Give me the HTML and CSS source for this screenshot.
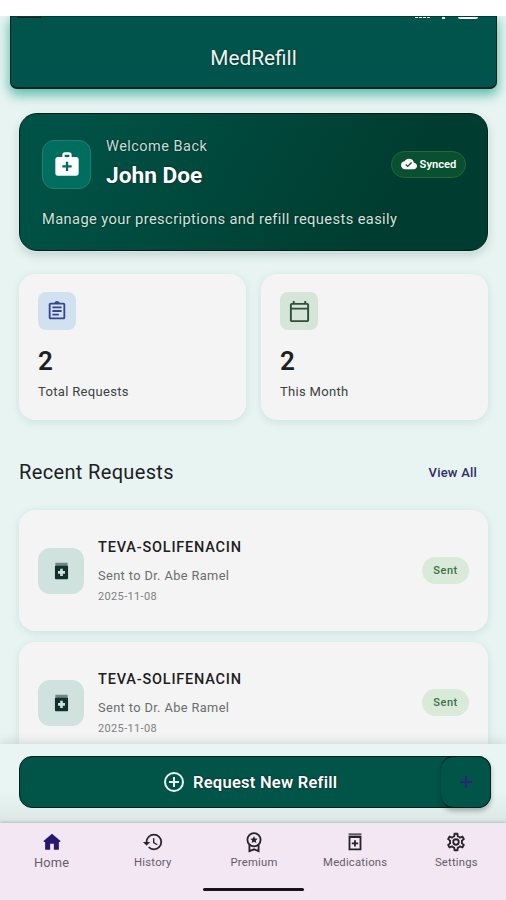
FILE: index.html
```html
<!DOCTYPE html>
<html lang="en">
<head>
<meta charset="utf-8">
<title>MedRefill</title>
<link rel="stylesheet" href="styles.css">
</head>
<body>
<div class="phone">
  <header class="topbar">
    <div class="status">
      <span class="clock"></span>
      <span class="signal"><i></i><i></i><i></i><i></i></span><span class="wifi"></span><span class="battery"></span>
    </div>
    <h1>MedRefill</h1>
  </header>

  <main class="content">
    <section class="hero">
      <div class="hero-row">
        <div class="hero-icon">
          <svg width="28" height="28" viewBox="0 0 24 24"><path fill="#fff" fill-rule="evenodd" d="M20 6h-4V4c0-1.100-.9-2-2-2h-4c-1.100 0-2 .9-2 2v2H4c-1.100 0-2 .9-2 2v12c0 1.100.9 2 2 2h16c1.100 0 2-.9 2-2V8c0-1.100-.9-2-2-2zM10 4h4v2h-4zm6 11h-3v3h-2v-3H8v-2h3v-3h2v3h3z"/></svg>
        </div>
        <div class="hero-text">
          <p class="welcome">Welcome Back</p>
          <p class="name">John Doe</p>
        </div>
        <div class="synced">
          <svg width="16" height="16" viewBox="0 0 24 24"><path fill="#fff" d="M19.350 10.040A7.490 7.490 0 0 0 12 4C9.110 4 6.600 5.640 5.350 8.040A5.994 5.994 0 0 0 0 14c0 3.310 2.690 6 6 6h13c2.760 0 5-2.240 5-5 0-2.640-2.050-4.780-4.650-4.960zM10 17l-3.500-3.500 1.410-1.410L10 14.170l5.180-5.170 1.410 1.410z"/></svg>
          <span>Synced</span>
        </div>
      </div>
      <p class="tagline">Manage your prescriptions and refill requests easily</p>
    </section>

    <section class="stats">
      <article class="card stat">
        <div class="stat-icon blue">
          <svg width="22" height="22" viewBox="0 0 24 24"><path fill="#34468f" fill-rule="evenodd" d="M7 15h7v2H7zm0-4h10v2H7zm0-4h10v2H7zm12-4h-4.180C14.400 1.840 13.300 1 12 1s-2.400.84-2.820 2H5c-1.100 0-2 .9-2 2v14c0 1.100.9 2 2 2h14c1.100 0 2-.9 2-2V5c0-1.100-.9-2-2-2zm0 16H5V5h14z"/></svg>
        </div>
        <p class="count">2</p>
        <p class="label">Total Requests</p>
      </article>
      <article class="card stat">
        <div class="stat-icon green">
          <svg width="23" height="23" viewBox="0 0 24 24"><path fill="#2f4f39" fill-rule="evenodd" d="M20 3h-1V1h-2v2H7V1H5v2H4c-1.100 0-2 .9-2 2v16c0 1.100.9 2 2 2h16c1.100 0 2-.9 2-2V5c0-1.100-.9-2-2-2zm0 18H4V10h16zm0-13H4V5h16z"/></svg>
        </div>
        <p class="count">2</p>
        <p class="label">This Month</p>
      </article>
    </section>

    <div class="section-head">
      <h2>Recent Requests</h2>
      <a class="view-all">View All</a>
    </div>

    <section class="requests">
      <article class="card request">
        <div class="med-icon">
          <svg width="21" height="22" viewBox="0 0 24 24" preserveAspectRatio="none"><path fill="#6e8580" d="M5 3h14v3H5z"/><path fill="#12302d" fill-rule="evenodd" d="M5.500 6h13c.6 0 1 .4 1 1v13c0 .6-.4 1-1 1h-13c-.6 0-1-.4-1-1V7c0-.6.4-1 1-1zM16 12h-2.500V9.500h-3V12H8v3h2.500v2.500h3V15H16z"/></svg>
        </div>
        <div class="request-text">
          <h3>TEVA-SOLIFENACIN</h3>
          <p class="doctor">Sent to Dr. Abe Ramel</p>
          <p class="date">2025-11-08</p>
        </div>
        <span class="sent">Sent</span>
      </article>
      <article class="card request">
        <div class="med-icon">
          <svg width="21" height="22" viewBox="0 0 24 24" preserveAspectRatio="none"><path fill="#6e8580" d="M5 3h14v3H5z"/><path fill="#12302d" fill-rule="evenodd" d="M5.500 6h13c.6 0 1 .4 1 1v13c0 .6-.4 1-1 1h-13c-.6 0-1-.4-1-1V7c0-.6.4-1 1-1zM16 12h-2.500V9.500h-3V12H8v3h2.500v2.500h3V15H16z"/></svg>
        </div>
        <div class="request-text">
          <h3>TEVA-SOLIFENACIN</h3>
          <p class="doctor">Sent to Dr. Abe Ramel</p>
          <p class="date">2025-11-08</p>
        </div>
        <span class="sent">Sent</span>
      </article>
    </section>
  </main>

  <div class="action">
    <div class="new-refill">
      <svg width="24" height="24" viewBox="0 0 24 24" fill="none" stroke="#eef4f2" stroke-width="2"><circle cx="12" cy="12" r="9"/><path d="M12 7v10M7 12h10"/></svg>
      <span>Request New Refill</span>
      <div class="fab"><svg width="14" height="14" viewBox="0 0 14 14"><path d="M7 1v12M1 7h12" stroke="#2d2273" stroke-width="2"/></svg></div>
    </div>
  </div>

  <nav class="nav">
    <a class="tab active">
      <svg width="22" height="22" viewBox="0 0 24 24"><path fill="#281770" d="M12 3 3 10.500V12h1.500v8.500H10V14h4v6.500h5.500V12H21v-1.500z"/></svg>
      <span>Home</span>
    </a>
    <a class="tab">
      <svg width="22" height="22" viewBox="0 0 24 24"><path fill="#27222c" d="M13 3a9 9 0 0 0-9 9H1l3.890 3.890.07.14L9 12H6c0-3.870 3.130-7 7-7s7 3.130 7 7-3.130 7-7 7c-1.930 0-3.680-.79-4.940-2.060l-1.420 1.420A8.954 8.954 0 0 0 13 21a9 9 0 0 0 0-18zm-1 5v5l4.280 2.540.72-1.210-3.500-2.080V8z"/></svg>
      <span>History</span>
    </a>
    <a class="tab">
      <svg width="22" height="22" viewBox="0 0 24 24" fill="none" stroke="#27222c" stroke-width="2"><circle cx="12" cy="9.500" r="7.200"/><path d="M7 15v7l5-2 5 2v-7"/><path fill="#27222c" stroke="none" d="M12 5.500l1.200 2.700 2.900.2-2.200 1.900.7 2.900-2.600-1.600-2.600 1.600.7-2.900-2.200-1.900 2.900-.2z"/></svg>
      <span>Premium</span>
    </a>
    <a class="tab">
      <svg width="22" height="22" viewBox="0 0 24 24"><path fill="#5e5862" d="M5 2.500h14V5H5z"/><path fill="#27222c" fill-rule="evenodd" d="M5 5.500h14V21H5zm2 2V19h10V7.500z"/><path fill="#27222c" d="M11 10h2v2.500h2.500v2H13V17h-2v-2.500H8.500v-2H11z"/></svg>
      <span>Medications</span>
    </a>
    <a class="tab">
      <svg width="22" height="22" viewBox="0 0 24 24"><path fill="#27222c" d="M19.430 12.980c.04-.32.07-.64.07-.98s-.03-.66-.07-.98l2.110-1.650c.19-.15.24-.42.12-.64l-2-3.460a.5.5 0 0 0-.61-.22l-2.490 1c-.52-.4-1.080-.73-1.690-.98l-.38-2.650A.488.488 0 0 0 14 2h-4c-.25 0-.46.18-.49.420l-.38 2.650c-.61.25-1.170.59-1.690.98l-2.490-1a.5.5 0 0 0-.61.220l-2 3.460c-.13.22-.07.49.12.64l2.110 1.650c-.04.32-.07.65-.07.98s.03.66.07.98l-2.110 1.650c-.19.15-.24.42-.12.64l2 3.460c.12.22.39.29.61.220l2.490-1c.52.4 1.080.73 1.690.98l.38 2.650c.03.24.24.42.49.42h4c.25 0 .46-.18.49-.42l.38-2.650c.61-.25 1.170-.59 1.690-.98l2.490 1c.23.09.49 0 .61-.22l2-3.460c.12-.22.07-.49-.12-.64zm-1.980-1.710c.04.31.05.52.05.73s-.02.43-.05.73l-.14 1.130.89.7 1.080.84-.7 1.210-1.270-.51-1.040-.42-.9.680c-.43.32-.84.56-1.250.73l-1.060.43-.16 1.130-.2 1.350h-1.400l-.19-1.350-.16-1.130-1.060-.43c-.43-.18-.83-.41-1.230-.71l-.91-.7-1.060.43-1.270.51-.7-1.210 1.080-.84.89-.7-.14-1.130c-.03-.31-.05-.54-.05-.74s.02-.43.05-.73l.14-1.130-.89-.7-1.080-.84.7-1.210 1.270.51 1.040.42.9-.68c.43-.32.84-.56 1.250-.73l1.060-.43.16-1.130.2-1.350h1.390l.19 1.350.16 1.130 1.060.43c.43.18.83.41 1.230.71l.91.7 1.060-.43 1.270-.51.7 1.210-1.070.85-.89.7zM12 8a4 4 0 1 0 0 8 4 4 0 0 0 0-8zm0 6a2 2 0 1 1 0-4 2 2 0 0 1 0 4z"/></svg>
      <span>Settings</span>
    </a>
    <div class="home-bar"></div>
  </nav>
</div>
</body>
</html>
```

FILE: styles.css
```css
* { box-sizing: border-box; }
body, h1, h2, h3, p { margin: 0; }
body {
  background: #fff;
  font-family: Roboto, "Liberation Sans", sans-serif;
  color: #1c2021;
  overflow: hidden;
}
svg { display: block; flex: none; }
.phone {
  width: 506px;
  height: 884px;
  margin-top: 16px;
  background: #e7f4f2;
  display: flex;
  flex-direction: column;
  overflow: hidden;
}
.topbar {
  position: relative;
  flex: none;
  height: 73px;
  margin: 0 9px 0 10px;
  background: #00544c;
  border: 1px solid #00251f;
  border-top-color: #003b34;
  border-bottom-width: 2px;
  border-radius: 0 0 7px 7px;
  box-shadow: 0 5px 12px 1px rgba(0, 150, 125, .6);
}
.status {
  display: flex;
  height: 3px;
  padding: 0 18px 0 6px;
  align-items: flex-start;
}
.clock { width: 24px; height: 1px; background: #14211f; margin-right: auto; }
.signal { display: flex; gap: 1px; margin-right: 12px; }
.signal i { width: 3px; height: 1px; background: #fff; }
.wifi { width: 3px; height: 2px; background: #dbe9e6; margin-right: 13px; }
.battery { width: 20px; height: 2px; background: #fff; border-radius: 0 0 2px 2px; }
h1 {
  text-align: center;
  font-size: 20.8px;
  line-height: 26px;
  font-weight: 400;
  margin-top: 25px;
  color: #eef3f1;
  text-shadow: 0 0 2px #001d19;
}
.content {
  flex: 1;
  min-height: 0;
  overflow: hidden;
  padding: 24px 18px 0 19px;
}
.hero {
  height: 138px;
  padding: 25px 21px 0 22px;
  border: 1px solid #001f18;
  border-radius: 18px;
  background: linear-gradient(120deg, #005246 10%, #003c2f 80%);
  box-shadow: 0 0 2px #fff, 0 4px 10px rgba(0, 60, 50, .18);
  color: #fff;
}
.hero-row { display: flex; align-items: center; height: 50px; }
.hero-icon {
  width: 49px;
  height: 49px;
  border-radius: 12px;
  background: #006e5f;
  border: 1px solid #267b6e;
  display: grid;
  place-items: center;
}
.hero-text { margin-left: 15px; flex: 1; }
.welcome { font-size: 14.5px; line-height: 18px; letter-spacing: .48px; color: #c8ddd8; margin-top: -4px; text-shadow: 0 0 2px #001d19; }
.name { font-size: 22.700px; line-height: 28px; font-weight: 700; margin-top: 6px; margin-bottom: -4px; text-shadow: 0 0 2px #001d19; }
.synced {
  width: 75px;
  height: 27px;
  border: 1px solid #28663c;
  border-radius: 14px;
  background: #08502f;
  display: flex;
  align-items: center;
  justify-content: center;
  gap: 3px;
  font-size: 11.2px;
  font-weight: 600;
}
.tagline { font-size: 14.7px; line-height: 18px; letter-spacing: .38px; color: #d2e3de; margin-top: 21px; text-shadow: 0 0 2px #001d19; }
.card {
  background: #f4f4f4;
  border-radius: 16px;
  box-shadow: 0 2px 9px rgba(40, 110, 95, .13);
}
.stats { display: grid; grid-template-columns: 227px 227px; gap: 15px; margin-top: 23px; }
.stat { height: 146px; padding: 18px 19px; }
.stat-icon { width: 38px; height: 38px; border-radius: 8px; display: grid; place-items: center; }
.blue { background: #d1e1f0; }
.green { background: #d5e5d7; }
.count { font-size: 26px; line-height: 30px; font-weight: 600; margin-top: 16px; }
.label { font-size: 13px; line-height: 18px; letter-spacing: .32px; margin-top: 7px; color: #3d4142; }
.section-head { display: flex; align-items: center; justify-content: space-between; height: 30px; margin-top: 37px; padding-right: 11px; }
h2 { font-size: 20px; font-weight: 400; letter-spacing: .35px; }
.view-all { font-size: 13px; font-weight: 500; letter-spacing: .2px; color: #302d62; }
.requests { display: grid; gap: 11px; margin-top: 23px; }
.request { height: 121px; padding: 0 19px; display: flex; align-items: center; }
.med-icon { width: 46px; height: 46px; border-radius: 12px; background: #cfe2de; display: grid; place-items: center; }
.request-text { flex: 1; margin-left: 14px; padding-top: 2px; }
h3 { font-size: 14.5px; line-height: 18px; font-weight: 500; letter-spacing: .8px; }
.doctor { font-size: 12.8px; line-height: 18px; letter-spacing: .38px; color: #6a6d6e; margin-top: 10px; }
.date { font-size: 11px; line-height: 14px; letter-spacing: .35px; color: #7e8081; margin-top: 5px; }
.sent { width: 47px; height: 27px; border-radius: 14px; background: #d9ead9; color: #397149; font-size: 11px; font-weight: 500; letter-spacing: .5px; line-height: 28px; text-align: center; }
.action {
  flex: none;
  height: 79px;
  padding: 12px 15px 0 19px;
  background: linear-gradient(#e8f5f3 60%, #dce7e5);
  box-shadow: 0 -3px 9px rgba(30, 60, 55, .12);
  position: relative;
}
.new-refill {
  position: relative;
  height: 52px;
  border: 1px solid #001f18;
  border-radius: 13px;
  background: #005448;
  display: flex;
  align-items: center;
  padding-left: 142px;
  gap: 7px;
  color: #fff;
  font-size: 16.5px;
  font-weight: 600;
  letter-spacing: .25px;
  text-shadow: 0 0 2px #001d19;
}
.fab {
  position: absolute;
  right: -1px;
  top: -1px;
  width: 50px;
  height: 52px;
  border-radius: 13px;
  border: solid #001f18;
  border-width: 1px 1px 1px 0;
  background: #005448;
  box-shadow: 0 3px 5px rgba(0, 0, 0, .28);
  display: grid;
  place-items: center;
  clip-path: inset(0 -10px -10px -4px);
}
.nav {
  position: relative;
  flex: none;
  height: 77px;
  padding-left: 1px;
  background: #f4e7f4;
  box-shadow: 0 -1px 3px rgba(80, 120, 120, .35);
  display: grid;
  grid-template-columns: repeat(5, 101.200px);
}
.tab { display: flex; flex-direction: column; align-items: center; padding-top: 8px; }
.tab span { font-size: 11.300px; line-height: 14px; letter-spacing: .2px; margin-top: 3px; color: #655c68; }
.tab.active span { font-size: 12.800px; }
.home-bar { position: absolute; left: 203px; top: 65px; width: 101px; height: 3px; border-radius: 2px; background: #19121c; }
```
